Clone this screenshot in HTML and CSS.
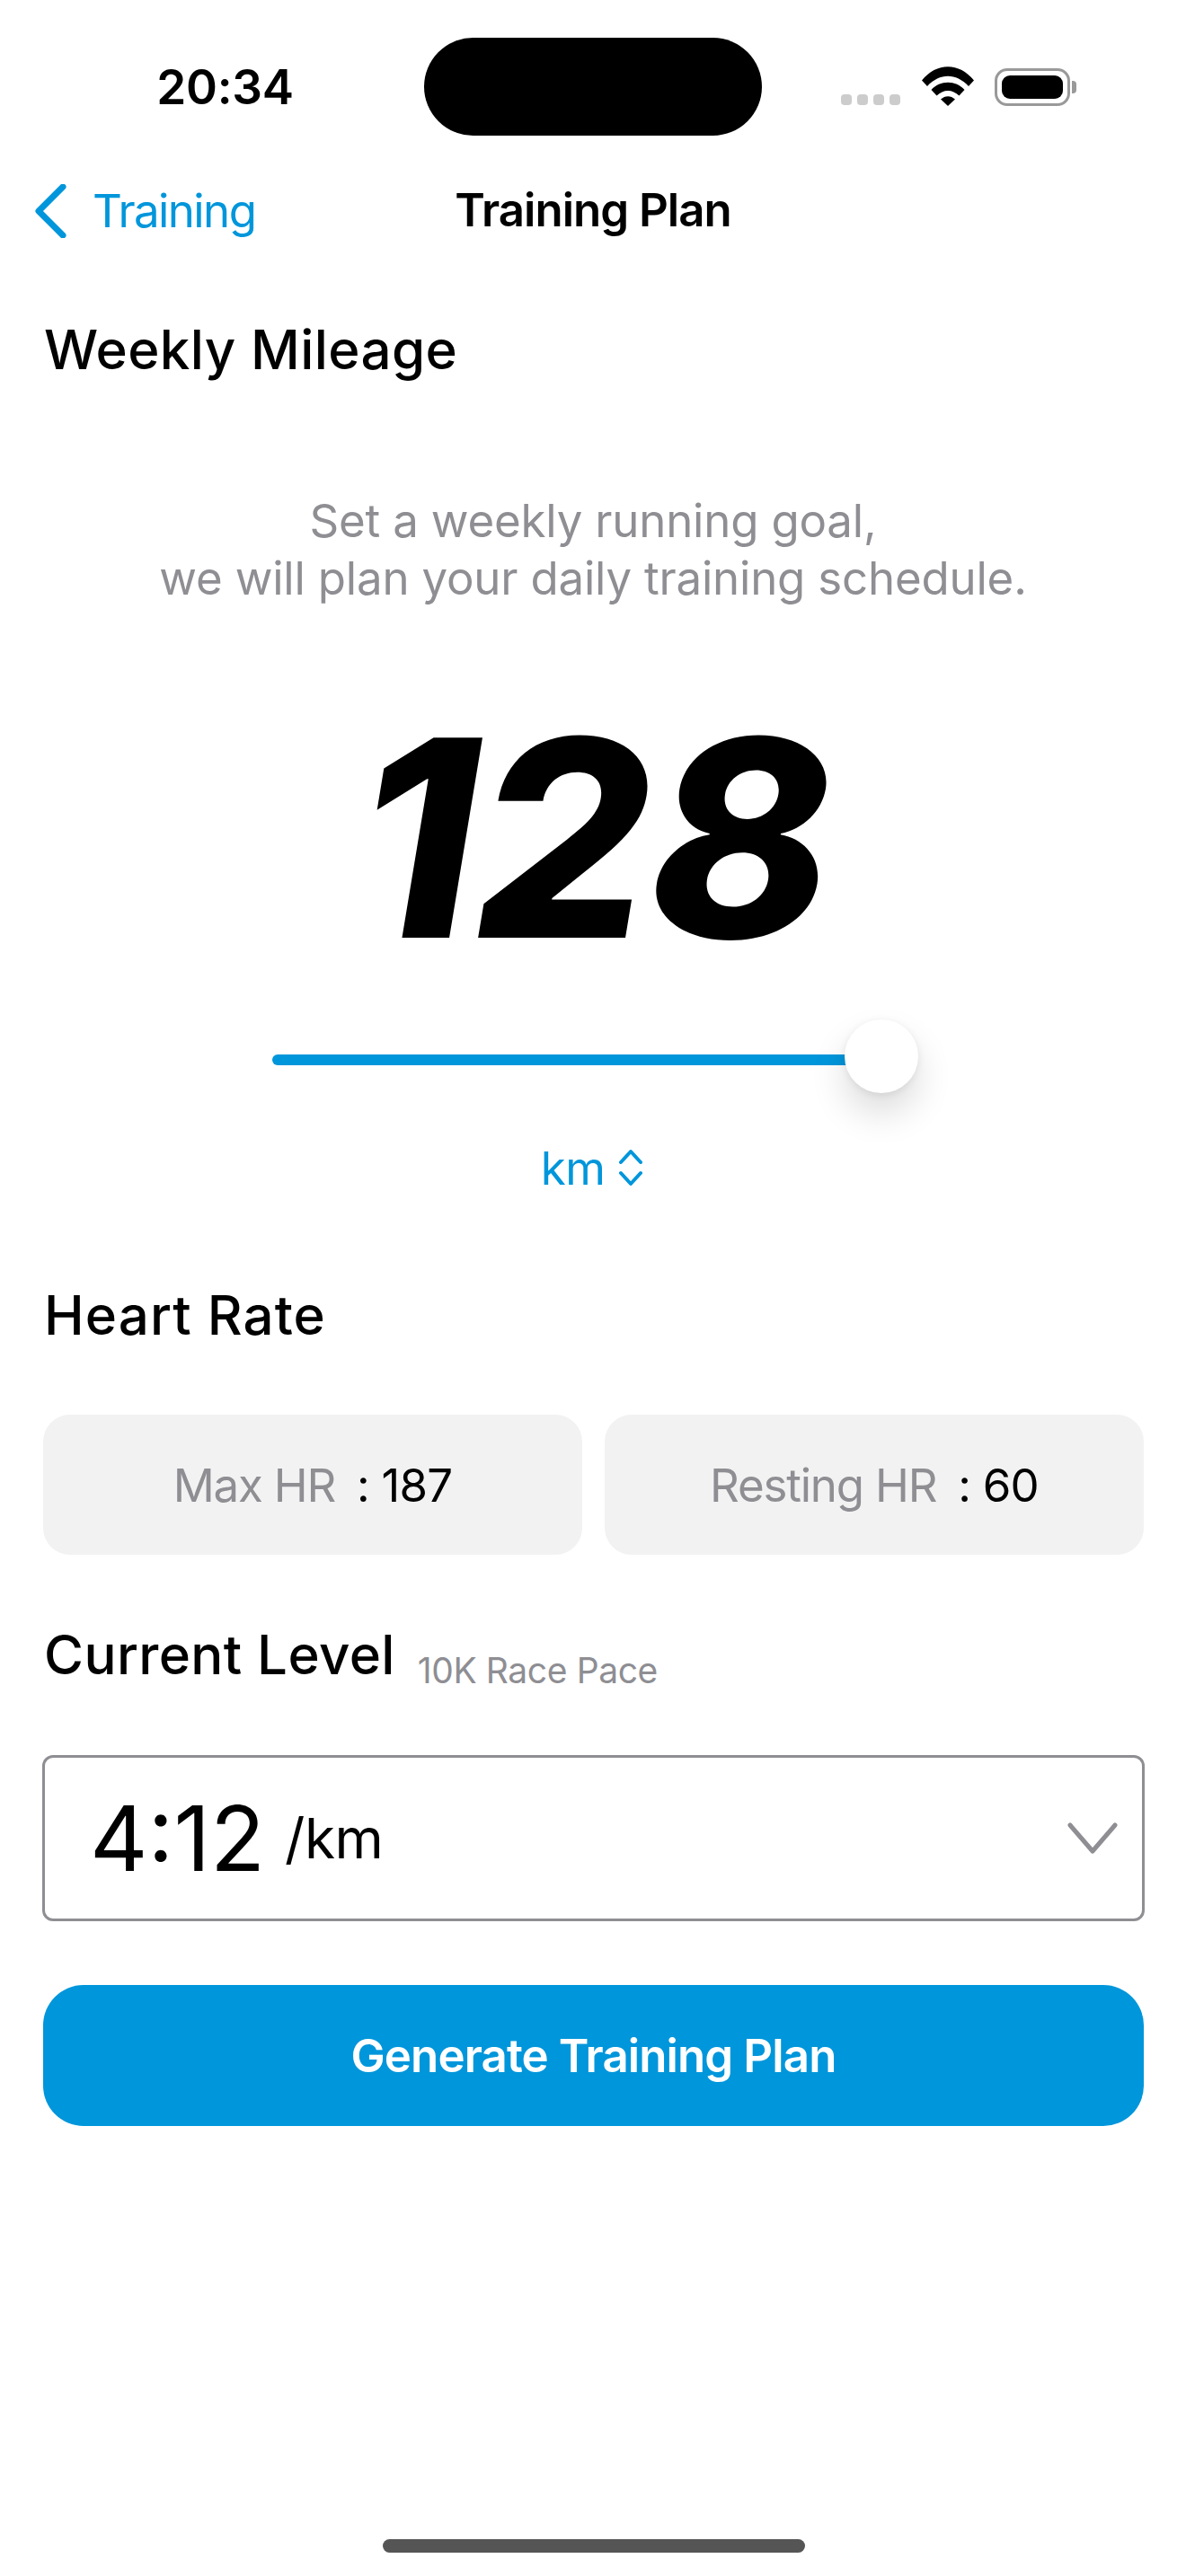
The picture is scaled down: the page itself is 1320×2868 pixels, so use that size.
FILE: index.html
```html
<!DOCTYPE html>
<html lang="en">
<head>
  <meta charset="UTF-8">
  <meta name="viewport" content="width=device-width, initial-scale=1.0">
  <title>Training Plan</title>
  <link rel="stylesheet" href="styles.css">
</head>
<body>
  <div class="screen">
    <div class="status-bar">
      <span class="time">20:34</span>
      <div class="island"></div>
      <div class="status-icons">
        <div class="signal"><i></i><i></i><i></i><i></i></div>
        <svg class="wifi" width="58" height="44" viewBox="0 0 58 44">
          <path d="M0 15.500 C16 -5 42 -5 58 15.500 L52 22 C38 7 20 7 6 22 Z" fill="#000"/>
          <path d="M10.500 26 C20 15 38 15 47.500 26 L41.500 32.500 C34 25 24 25 16.500 32.500 Z" fill="#000"/>
          <path d="M21 36.500 C26 32 32 32 37 36.500 L29 44 Z" fill="#000"/>
        </svg>
        <div class="battery"><div class="battery-fill"></div></div>
        <div class="battery-cap"></div>
      </div>
    </div>

    <div class="nav">
      <a class="back">
        <svg width="38" height="60" viewBox="0 0 38 60">
          <path d="M33 3 L6 30 L33 57" fill="none" stroke="#0096db" stroke-width="7" stroke-linecap="round" stroke-linejoin="round"/>
        </svg>
        <span>Training</span>
      </a>
      <div class="nav-title">Training Plan</div>
    </div>

    <h2 class="heading weekly">Weekly Mileage</h2>

    <p class="intro">Set a weekly running goal,<br>we will plan your daily training schedule.</p>

    <div class="mileage">128</div>

    <div class="slider">
      <div class="track"></div>
      <div class="thumb"></div>
    </div>

    <div class="unit">
      <span>km</span>
      <svg width="26" height="42" viewBox="0 0 26 42">
        <path d="M2 15 L13 3 L24 15 M2 27 L13 39 L24 27" fill="none" stroke="#0096db" stroke-width="4" stroke-linecap="round" stroke-linejoin="round"/>
      </svg>
    </div>

    <h2 class="heading rate">Heart Rate</h2>

    <div class="hr-row">
      <div class="hr-card"><span class="hr-label">Max HR</span><span class="hr-value">: 187</span></div>
      <div class="hr-card"><span class="hr-label">Resting HR</span><span class="hr-value">: 60</span></div>
    </div>

    <div class="level-head">
      <h2 class="heading">Current Level</h2>
      <span class="level-note">10K Race Pace</span>
    </div>

    <div class="pace-select">
      <span class="pace">4:12</span>
      <span class="pace-unit">/km</span>
      <svg class="pace-arrow" width="56" height="36" viewBox="0 0 56 36">
        <path d="M3 3 L28 32 L53 3" fill="none" stroke="#8e8e93" stroke-width="5" stroke-linecap="round" stroke-linejoin="round"/>
      </svg>
    </div>

    <button class="generate">Generate Training Plan</button>

    <div class="home-bar"></div>
  </div>
</body>
</html>
```

FILE: styles.css
```css
/* General Styling */
* {
  box-sizing: border-box;
}

body {
  margin: 0;
  background: #fff;
  color: #000;
  font-family: Inter, "Noto Sans", sans-serif;
}

.screen {
  width: 1320px;
  height: 2868px;
  display: flex;
  flex-direction: column;
  overflow: hidden;
}

/* Status bar */
.status-bar {
  height: 180px;
  padding-top: 42px;
  display: flex;
  align-items: flex-start;
}

.time {
  width: 472px;
  padding-left: 29px;
  height: 109px;
  line-height: 110px;
  text-align: center;
  font-size: 53px;
  font-weight: 600;
  letter-spacing: -0.3px;
}

.island {
  width: 376px;
  height: 109px;
  background: #000;
  border-radius: 55px;
}

.status-icons {
  margin-left: 88px;
  margin-top: 32px;
  display: flex;
  align-items: flex-end;
  height: 44px;
}

.signal {
  display: flex;
  gap: 6px;
  margin-bottom: 1px;
}

.signal i {
  width: 12px;
  height: 12px;
  border-radius: 4px;
  background: #ccc;
}

.wifi {
  margin-left: 24px;
}

.battery {
  width: 84px;
  height: 42px;
  margin-left: 23px;
  padding: 5px;
  border: 3px solid #999;
  border-radius: 14px;
}

.battery-fill {
  height: 100%;
  background: #000;
  border-radius: 9px;
}

.battery-cap {
  width: 5px;
  height: 14px;
  margin: 0 0 14px 2px;
  background: #999;
  border-radius: 0 4px 4px 0;
}

/* Nav */
.nav {
  position: relative;
  height: 174px;
  padding: 24px 0 0 37px;
}

.back {
  display: flex;
  align-items: center;
  gap: 28px;
  color: #0096db;
  font-size: 51px;
  letter-spacing: -1.6px;
}

.nav-title {
  position: absolute;
  left: 0;
  right: 0;
  top: 24px;
  line-height: 60px;
  text-align: center;
  font-size: 51px;
  font-weight: 600;
  letter-spacing: -1px;
}

.heading {
  margin: 0;
  font-size: 60px;
  font-weight: 500;
  line-height: 70px;
  letter-spacing: 0.4px;
}

.weekly {
  padding-left: 49px;
}

.intro {
  margin: 124px 0 0;
  text-align: center;
  font-size: 51px;
  line-height: 64px;
  letter-spacing: -0.2px;
  color: #8e8e93;
}

.mileage {
  margin-top: 104px;
  height: 306px;
  line-height: 306px;
  text-align: center;
  font-size: 306px;
  font-weight: 800;
  font-style: italic;
  letter-spacing: -2px;
}

/* Slider */
.slider {
  position: relative;
  margin: 49px 0 0 303px;
  width: 719px;
  height: 82px;
}

.track {
  width: 660px;
  height: 12px;
  margin-top: 39px;
  background: #0096db;
  border-radius: 6px;
}

.thumb {
  position: absolute;
  right: 0;
  top: 0;
  width: 82px;
  height: 82px;
  background: #fff;
  border-radius: 50%;
  box-shadow: 0 22px 40px rgba(0, 0, 0, 0.14), 0 2px 8px rgba(0, 0, 0, 0.08);
}

.unit {
  margin-top: 52px;
  padding-right: 3px;
  display: flex;
  justify-content: center;
  align-items: center;
  gap: 16px;
  height: 62px;
  color: #0096db;
  font-size: 51px;
  letter-spacing: -0.5px;
}

.rate {
  margin-top: 98px;
  padding-left: 49px;
  letter-spacing: 1.1px;
}

/* Heart rate cards */
.hr-row {
  margin: 76px 47px 0 48px;
  display: flex;
  gap: 25px;
}

.hr-card {
  flex: 1;
  height: 156px;
  display: flex;
  align-items: center;
  justify-content: center;
  gap: 24px;
  background: #f2f2f2;
  border-radius: 30px;
  font-size: 51px;
  letter-spacing: -0.8px;
}

.hr-label {
  color: #8e8e93;
  letter-spacing: -1.2px;
}

.level-head {
  margin: 76px 0 0 49px;
  display: flex;
  align-items: flex-end;
  gap: 25px;
}

.level-note {
  font-size: 39px;
  line-height: 34px;
  letter-spacing: -0.4px;
  color: #8e8e93;
}

/* Pace select */
.pace-select {
  margin: 77px 46px 0 47px;
  height: 185px;
  padding: 0 27px 0 50px;
  display: flex;
  align-items: center;
  border: 3px solid #8e8e93;
  border-radius: 12px;
}

.pace {
  font-size: 100px;
}

.pace-unit {
  margin: 0 0 0 22px;
  font-size: 62px;
  letter-spacing: -0.5px;
}

.pace-arrow {
  margin-left: auto;
}

.generate {
  margin: 71px 47px 0 48px;
  height: 157px;
  border: none;
  border-radius: 45px;
  background: #0096db;
  color: #fff;
  font-family: inherit;
  font-size: 51px;
  font-weight: 600;
  letter-spacing: -0.9px;
}

.home-bar {
  margin: auto 0 26px 426px;
  width: 470px;
  height: 15px;
  background: #555;
  border-radius: 8px;
}
```
